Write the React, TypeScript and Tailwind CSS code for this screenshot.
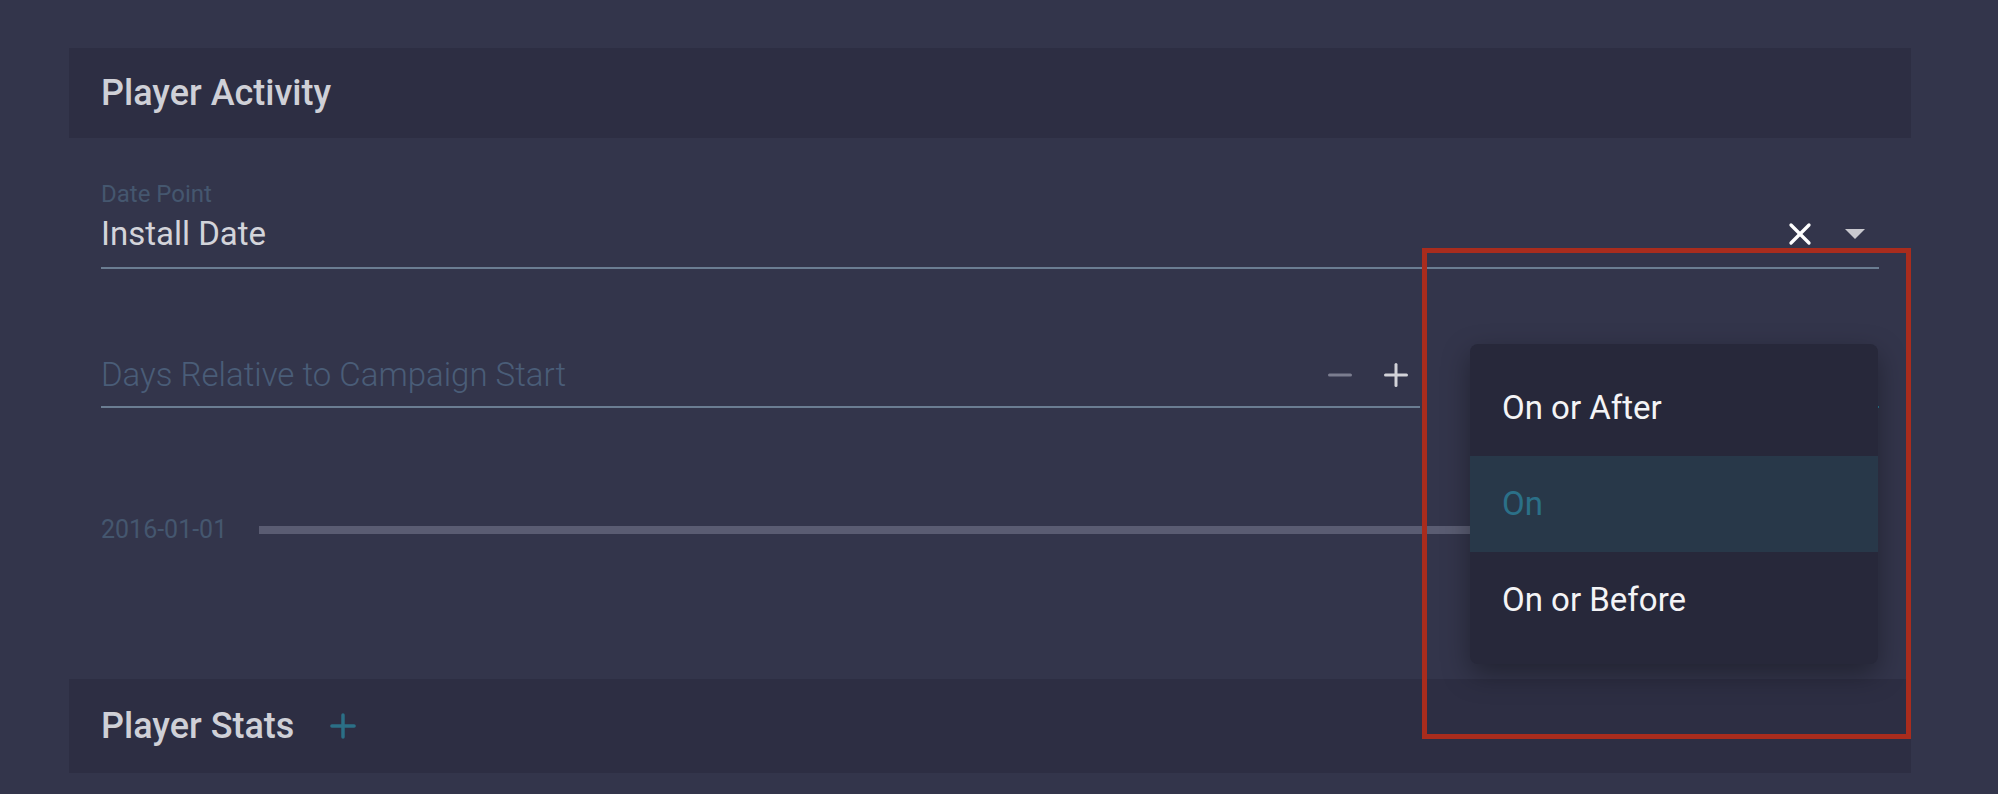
import { X, Plus, Minus } from "lucide-react"

const options = ["On or After", "On", "On or Before"]

function SectionHeader({ title, action, tall }: { title: string; action?: boolean; tall?: boolean }) {
  return (
    <div className={tall ? "flex h-[94px] items-center gap-[30px] bg-[#2d2e43] px-[32px]" : "flex h-[90px] items-center gap-[30px] bg-[#2d2e43] px-[32px]"}>
      <span className="text-[36px] font-medium text-[#cfd0d7]">{title}</span>
      {action && <Plus className="h-[38px] w-[38px] text-[#2b6f86]" strokeWidth={2.2} />}
    </div>
  )
}

function OptionsMenu() {
  return (
    <div className="absolute left-[1470px] top-[344px] w-[408px] rounded-[8px] bg-[#27283a] py-[16px] shadow-[0_10px_28px_rgba(0,0,0,0.35)]">
      {options.map(option => (
        <div
          key={option}
          className={
            option === "On"
              ? "flex h-[96px] items-center bg-[#283849] px-[32px] text-[33px] text-[#2b7088]"
              : "flex h-[96px] items-center px-[32px] text-[33px] text-[#f4f4f6]"
          }
        >
          {option}
        </div>
      ))}
    </div>
  )
}

export default function App() {
  return (
    <div className="relative h-[794px] w-full overflow-hidden bg-[#33354b] pl-[69px] pr-[87px] pt-[48px] font-['Roboto',sans-serif]">
      <SectionHeader title="Player Activity" />

      <div className="px-[32px]">
        {/* date point select */}
        <div className="mt-[42px] border-b-2 border-[#6b7d92] pb-[13px]">
          <div className="text-[24px] leading-[28px] text-[#45576f]">Date Point</div>
          <div className="mt-[6px] flex h-[40px] items-center">
            <span className="flex-1 text-[33px] text-[#d3d4da]">Install Date</span>
            <X className="mr-[27px] h-[36px] w-[36px] text-white" strokeWidth={2.2} />
            <svg width="20" height="10" viewBox="0 0 20 10" className="mr-[14px]">
              <path d="M0 0 L20 0 L10 10 Z" fill="#c9c9cf" />
            </svg>
          </div>
        </div>

        {/* days relative + comparison */}
        <div className="mt-[86px] flex gap-[60px]">
          <div className="flex h-[53px] flex-1 items-start border-b-2 border-[#6b7d92] pr-[6px]">
            <span className="flex h-[40px] flex-1 items-center text-[33px] font-light text-[#4a5d78]">
              Days Relative to Campaign Start
            </span>
            <div className="flex h-[40px] items-center gap-[20px]">
              <Minus className="h-[36px] w-[36px] text-[#7b7d8f]" strokeWidth={2} />
              <Plus className="h-[36px] w-[36px] text-[#d2d2d8]" strokeWidth={2} />
            </div>
          </div>
          <div className="h-[53px] w-[399px] border-b-2 border-[#2a7a93]" />
        </div>

        {/* date slider */}
        <div className="mt-[108px] flex h-[28px] items-center gap-[32px]">
          <span className="text-[25px] text-[#45576f]">2016-01-01</span>
          <div className="mr-[200px] h-[8px] flex-1 bg-[#5a5c72]" />
        </div>
      </div>

      <div className="mt-[135px]">
        <SectionHeader title="Player Stats" action tall />
      </div>

      <OptionsMenu />

      {/* annotation box */}
      <div className="absolute left-[1422px] top-[248px] h-[491px] w-[489px] border-[5px] border-[#a92c1d]" />
    </div>
  )
}
